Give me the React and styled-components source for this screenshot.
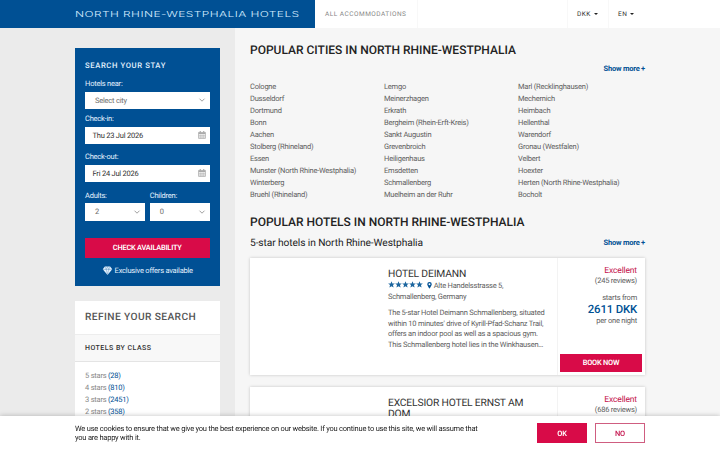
import React from 'react';
import styled, { createGlobalStyle } from 'styled-components';

const GlobalStyle = createGlobalStyle`
  * {
    box-sizing: border-box;
  }
  body {
    margin: 0;
    overflow: hidden;
    background-color: #f6f6f6;
    font-family: Roboto, "Liberation Sans", sans-serif;
    font-size: 7.5px;
    letter-spacing: -0.22px;
    text-rendering: geometricPrecision;
    color: #606060;
  }
  h1, h2, h3, h4, p, ul {
    margin: 0;
    padding: 0;
    font-weight: 400;
  }
  ul {
    list-style: none;
  }
  button {
    font-family: inherit;
    letter-spacing: inherit;
    text-rendering: inherit;
    padding: 0;
    border: 0;
  }
`;

const Page = styled.div`
  height: 450px;
  overflow: hidden;
`;

const Header = styled.header`
  display: flex;
  height: 28px;
  background-color: #fff;
`;

const Brand = styled.div`
  width: 314.5px;
  padding: 1px 0 0 75px;
  background-color: #005094;
  color: #d5ecff;
  line-height: 28px;
  white-space: nowrap;
  span {
    display: inline-block;
    font-family: Inter, sans-serif;
    font-size: 8.3px;
    font-weight: 300;
    letter-spacing: 0.3px;
    transform: scaleX(1.44);
    transform-origin: left center;
  }
`;

const NavLink = styled.div`
  width: 103px;
  padding-left: 10.5px;
  border-right: 1px solid #f8f8f8;
  color: #888;
  font-size: 6.5px;
  letter-spacing: 0.5px;
  line-height: 28px;
  white-space: nowrap;
`;

const Switcher = styled.div`
  display: flex;
  align-items: center;
  gap: 3px;
  width: ${props => props.$width}px;
  margin-left: ${props => props.$push ? 'auto' : 0};
  padding-left: 9px;
  border-left: 1px solid #f8f8f8;
  color: #333;
  font-size: 6.5px;
  letter-spacing: 0.5px;
  &:after {
    content: '';
    border: 2px solid transparent;
    border-top-color: #222;
    border-bottom: 0;
  }
  &:last-child {
    margin-right: 75px;
  }
`;

const Columns = styled.div`
  display: flex;
  height: 422px;
`;

const Sidebar = styled.aside`
  width: 235px;
  padding: 20px 15.5px 0 75px;
  background-color: #ebebeb;
`;

const Main = styled.main`
  width: 410px;
  padding: 15px 0 0 15px;
`;

const SearchBox = styled.section`
  height: 238px;
  padding: 11px 10px 0;
  background-color: #005094;
  color: #e4f2ff;
`;

const SearchTitle = styled.h3`
  height: 19px;
  font-size: 7.7px;
  font-weight: 500;
  letter-spacing: 0.6px;
  line-height: 13px;
`;

const Field = styled.div`
  flex: 1;
  margin-bottom: ${props => props.$gap}px;
  label {
    display: block;
    height: 13.5px;
    line-height: 11px;
  }
`;

const Control = styled.div`
  display: flex;
  align-items: center;
  justify-content: space-between;
  height: 17.5px;
  padding: 0 4px 0 ${props => props.$indent}px;
  background-color: #fff;
  color: ${props => props.$muted ? '#6d6d6d' : '#333'};
  svg {
    display: block;
  }
`;

const FieldRow = styled.div`
  display: flex;
  gap: 5px;
`;

const PrimaryButton = styled.button`
  display: block;
  width: ${props => props.$width};
  height: ${props => props.$height}px;
  background-color: #d80b48;
  color: #fff;
  font-size: 7.4px;
  font-weight: 600;
`;

const Offers = styled.div`
  display: flex;
  align-items: center;
  justify-content: center;
  gap: 2px;
  margin-top: 7px;
  line-height: 12px;
`;

const RefineBox = styled.section`
  margin-top: 15px;
  height: 140px;
  background-color: #fff;
`;

const RefineTitle = styled.h3`
  height: 33px;
  padding-left: 10px;
  color: #555;
  font-size: 10.2px;
  font-weight: 500;
  letter-spacing: 0.4px;
  line-height: 34px;
`;

const RefineGroup = styled.h4`
  height: 28px;
  padding-left: 10px;
  border-top: 1px solid #ededed;
  border-bottom: 1px solid #e4e4e4;
  background-color: #f8f8f8;
  color: #333;
  font-size: 7px;
  font-weight: 500;
  letter-spacing: 0.47px;
  line-height: 27px;
`;

const StarList = styled.ul`
  padding: 8px 10px;
  line-height: 12px;
  color: #888;
  b {
    font-weight: 400;
    color: #005094;
  }
`;

const Heading = styled.h2`
  height: 15px;
  color: #222;
  font-size: 12px;
  font-weight: 500;
  letter-spacing: 0;
  line-height: 15px;
  white-space: nowrap;
`;

const SubHeading = styled.div`
  display: flex;
  justify-content: space-between;
  height: 14px;
  margin-top: ${props => props.$top}px;
  line-height: 14px;
  h3 {
    color: #222;
    font-size: 10.2px;
    letter-spacing: -0.09px;
    line-height: 15px;
  }
  a {
    margin-left: auto;
    color: #005094;
    font-weight: 700;
  }
`;

const CityGrid = styled.div`
  display: grid;
  grid-template-columns: 134px 134px 1fr;
  margin: 4.5px 0 14.5px;
  line-height: 12px;
  white-space: nowrap;
`;

const Card = styled.article`
  display: flex;
  width: 395px;
  height: 117px;
  margin-top: ${props => props.$top}px;
  background-color: #fff;
  box-shadow: 0 0 3px rgba(0, 0, 0, 0.2);
`;

const Photo = styled.div`
  flex: none;
  width: 128px;
`;

const Info = styled.div`
  flex: 1;
  min-width: 0;
  padding: 10px 8px 0 10px;
  h4 {
    padding-right: 10px;
    color: #333;
    font-size: 10.3px;
    letter-spacing: -0.17px;
    line-height: 11px;
  }
`;

const Address = styled.p`
  margin-top: 1px;
  line-height: 11px;
  svg {
    vertical-align: -1px;
  }
`;

const Stars = styled.span`
  display: inline-flex;
  margin-right: 4px;
`;

const Description = styled.p`
  margin-top: 6px;
  line-height: 10.5px;
  white-space: nowrap;
`;

const Offer = styled.div`
  display: flex;
  flex: none;
  flex-direction: column;
  width: 88px;
  padding: 8px 3px 3px 2px;
  border-left: 1px solid #f3f3f3;
  text-align: right;
  p {
    padding-right: 5px;
    line-height: 10px;
  }
  .rating {
    color: #c4124c;
    font-size: 8.5px;
    letter-spacing: -0.15px;
  }
  .from {
    margin-top: 7px;
  }
  .price {
    color: #005094;
    font-size: 11.4px;
    font-weight: 500;
    letter-spacing: -0.17px;
    line-height: 12px;
  }
  .night {
    line-height: 12px;
  }
  button {
    margin-top: auto;
  }
`;

const CookieBar = styled.div`
  position: fixed;
  left: 0;
  right: 0;
  bottom: 0;
  display: flex;
  height: 34px;
  padding: 7px 75px 0;
  background-color: #fff;
  box-shadow: 0 0 5px rgba(0, 0, 0, 0.25);
  color: #222;
  p {
    width: 462px;
    padding-top: 1px;
    line-height: 9px;
    white-space: nowrap;
  }
`;

const OutlineButton = styled.button`
  width: 50px;
  height: 20px;
  margin-left: 8px;
  border: 1px solid #cf5d80;
  background-color: #fff;
  color: #c4124c;
  font-size: 7.4px;
  font-weight: 500;
`;

const Chevron = () => (
  <svg width="8" height="6" viewBox="0 0 8 6" fill="none" stroke="#888" strokeWidth="0.8">
    <path d="M1.5 1.700L4 4.200l2.500-2.500"/>
  </svg>
);

const Calendar = () => (
  <svg width="8" height="8" viewBox="0 0 14 14" fill="none" stroke="#aaa">
    <path d="M1 2.5h12v10.500H1z" strokeWidth="1.300"/>
    <path d="M1 4h12" strokeWidth="3"/>
    <path d="M4 0v3M10 0v3" strokeWidth="2"/>
    <path d="M1 8h12M1 10.500h12M4 6v7M7 6v7M10 6v7" strokeWidth="0.900"/>
  </svg>
);

const Diamond = () => (
  <svg width="11" height="9.500" viewBox="0 0 20 18">
    <path d="M5 1h10l4 5-9 11L1 6z" fill="#e4f2ff"/>
    <path d="M1 6.500h18M7.500 6.500L10 16l2.500-9.500M5.500 1.500l2 5L10 1.500l2.500 5 2-5" fill="none" stroke="#005094" strokeWidth="0.500"/>
  </svg>
);

const Star = () => (
  <svg width="7" height="7" viewBox="0 0 14 14" fill="#1c669f">
    <path d="M7 .3l1.800 4.500 4.900.3-3.800 3.100 1.300 4.900L7 10.400l-4.200 2.700 1.300-4.900L.3 5.100l4.900-.3z"/>
  </svg>
);

const Pin = () => (
  <svg width="5" height="7" viewBox="0 0 10 14">
    <path d="M5 0a4.500 4.500 0 0 0-4.500 4.600C.5 7.500 5 13.500 5 13.500s4.500-6 4.500-8.900A4.500 4.500 0 0 0 5 0zm0 6.500a1.900 1.900 0 1 1 0-3.800 1.900 1.900 0 0 1 0 3.800z" fill="#005094"/>
  </svg>
);

const cities = [
  ['Cologne', 'Dusseldorf', 'Dortmund', 'Bonn', 'Aachen', 'Stolberg (Rhineland)', 'Essen', 'Munster (North Rhine-Westphalia)', 'Winterberg', 'Bruehl (Rhineland)'],
  ['Lemgo', 'Meinerzhagen', 'Erkrath', 'Bergheim (Rhein-Erft-Kreis)', 'Sankt Augustin', 'Grevenbroich', 'Heiligenhaus', 'Emsdetten', 'Schmallenberg', 'Muelheim an der Ruhr'],
  ['Marl (Recklinghausen)', 'Mechernich', 'Heimbach', 'Hellenthal', 'Warendorf', 'Gronau (Westfalen)', 'Velbert', 'Hoexter', 'Herten (North Rhine-Westphalia)', 'Bocholt'],
];

const classes = [[5, 28], [4, 810], [3, 2451], [2, 358]];

const Search = () => (
  <SearchBox>
    <SearchTitle>SEARCH YOUR STAY</SearchTitle>
    <Field $gap={4}>
      <label>Hotels near:</label>
      <Control $indent={10} $muted>Select city<Chevron/></Control>
    </Field>
    <Field $gap={7}>
      <label>Check-in:</label>
      <Control $indent={7.5}>Thu 23 Jul 2026<Calendar/></Control>
    </Field>
    <Field $gap={7.5}>
      <label>Check-out:</label>
      <Control $indent={7.5}>Fri 24 Jul 2026<Calendar/></Control>
    </Field>
    <FieldRow>
      <Field $gap={17.5}>
        <label>Adults:</label>
        <Control $indent={10} $muted>2<Chevron/></Control>
      </Field>
      <Field $gap={17.5}>
        <label>Children:</label>
        <Control $indent={10} $muted>0<Chevron/></Control>
      </Field>
    </FieldRow>
    <PrimaryButton $width="100%" $height={19.5}>CHECK AVAILABILITY</PrimaryButton>
    <Offers><Diamond/>Exclusive offers available</Offers>
  </SearchBox>
);

const Hotel = (props) => {
  const { top, name, reviews, price, address, description } = props;
  return (
    <Card $top={top}>
      <Photo/>
      <Info>
        <h4>{name}</h4>
        { address &&
          <Address>
            <Stars><Star/><Star/><Star/><Star/><Star/></Stars>
            <Pin/> {address[0]}<br/>{address[1]}
          </Address>
        }
        { description &&
          <Description>
            {description.map(line => <React.Fragment key={line}>{line}<br/></React.Fragment>)}
          </Description>
        }
      </Info>
      <Offer>
        <p className="rating">Excellent</p>
        <p>({reviews} reviews)</p>
        { price &&
          <>
            <p className="from">starts from</p>
            <p className="price">{price}</p>
            <p className="night">per one night</p>
            <PrimaryButton $width="100%" $height={18.5}>BOOK NOW</PrimaryButton>
          </>
        }
      </Offer>
    </Card>
  );
};

const App = () => (
  <Page>
    <GlobalStyle/>
    <Header>
      <Brand><span>NORTH RHINE-WESTPHALIA HOTELS</span></Brand>
      <NavLink>ALL ACCOMMODATIONS</NavLink>
      <Switcher $width={41} $push>DKK</Switcher>
      <Switcher $width={37}>EN</Switcher>
    </Header>
    <Columns>
      <Sidebar>
        <Search/>
        <RefineBox>
          <RefineTitle>REFINE YOUR SEARCH</RefineTitle>
          <RefineGroup>HOTELS BY CLASS</RefineGroup>
          <StarList>
            {classes.map(([stars, count]) => <li key={stars}>{stars} stars <b>({count})</b></li>)}
          </StarList>
        </RefineBox>
      </Sidebar>
      <Main>
        <Heading>POPULAR CITIES IN NORTH RHINE-WESTPHALIA</Heading>
        <SubHeading $top={4}><a>Show more +</a></SubHeading>
        <CityGrid>
          {cities.map(column => (
            <ul key={column[0]}>
              {column.map(city => <li key={city}>{city}</li>)}
            </ul>
          ))}
        </CityGrid>
        <Heading>POPULAR HOTELS IN NORTH RHINE-WESTPHALIA</Heading>
        <SubHeading $top={6}><h3>5-star hotels in North Rhine-Westphalia</h3><a>Show more +</a></SubHeading>
        <Hotel
          top={8}
          name="HOTEL DEIMANN"
          reviews={245}
          price="2611 DKK"
          address={['Alte Handelsstrasse 5,', 'Schmallenberg, Germany']}
          description={[
            'The 5-star Hotel Deimann Schmallenberg, situated',
            'within 10 minutes\' drive of Kyrill-Pfad-Schanz Trail,',
            'offers an indoor pool as well as a spacious gym.',
            'This Schmallenberg hotel lies in the Winkhausen…',
          ]}
        />
        <Hotel top={12} name="EXCELSIOR HOTEL ERNST AM DOM" reviews={686}/>
      </Main>
    </Columns>
    <CookieBar>
      <p>
        We use cookies to ensure that we give you the best experience on our website. If you continue to use this site, we will assume that<br/>
        you are happy with it.
      </p>
      <PrimaryButton $width="50px" $height={20}>OK</PrimaryButton>
      <OutlineButton>NO</OutlineButton>
    </CookieBar>
  </Page>
);

export default App;
